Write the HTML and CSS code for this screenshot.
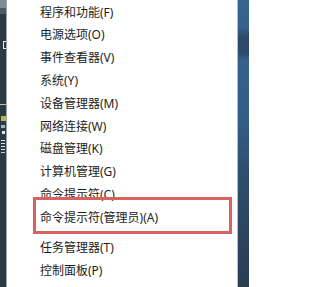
FILE: index.html
```html
<!DOCTYPE html>
<html lang="zh-CN">
<head>
<meta charset="utf-8">
<title>Win+X 菜单</title>
<link rel="stylesheet" href="styles.css">
</head>
<body>
<div class="screen">
  <div class="desk-left">
    <svg width="7" height="287" viewBox="0 0 7 287">
      <rect x="0" y="0" width="6" height="287" fill="#2c3a43"/>
      <rect x="0" y="0" width="6" height="8" fill="#7d8d98"/>
      <rect x="0" y="8" width="6" height="6" fill="#4c5b65"/>
      <rect x="6" y="0" width="1" height="287" fill="#9aa3a8"/>
      <rect x="3" y="41" width="3" height="1" fill="#e8ecee"/>
      <rect x="3" y="41" width="1" height="8" fill="#e8ecee"/>
      <rect x="3" y="48" width="3" height="1" fill="#e8ecee"/>
      <rect x="0" y="104" width="6" height="1" fill="#c9c48a"/>
      <rect x="1" y="116" width="5" height="5" fill="#b9b649"/>
      <rect x="1" y="125" width="4" height="3" fill="#9fb4c8"/>
      <rect x="2" y="131" width="3" height="3" fill="#dfe6ec"/>
      <rect x="1" y="140" width="4" height="1" fill="#dfe3e6"/>
      <rect x="1" y="143" width="4" height="1" fill="#dfe3e6"/>
      <rect x="1" y="146" width="4" height="1" fill="#dfe3e6"/>
      <rect x="1" y="149" width="4" height="1" fill="#dfe3e6"/>
      <rect x="1" y="152" width="4" height="1" fill="#c9ced2"/>
    </svg>
  </div>
  <div class="menu">
    <ul class="group">
      <li class="item">程序和功能(F)</li>
      <li class="item">电源选项(O)</li>
      <li class="item">事件查看器(V)</li>
      <li class="item">系统(Y)</li>
      <li class="item">设备管理器(M)</li>
      <li class="item">网络连接(W)</li>
      <li class="item">磁盘管理(K)</li>
      <li class="item">计算机管理(G)</li>
      <li class="item">命令提示符(C)</li>
      <li class="item">命令提示符(管理员)(A)</li>
    </ul>
    <ul class="group group-second">
      <li class="item">任务管理器(T)</li>
      <li class="item">控制面板(P)</li>
    </ul>
    <div class="highlight"></div>
  </div>
  <div class="desk-right"></div>
</div>
</body>
</html>
```

FILE: styles.css
```css
html, body {
  margin: 0;
  padding: 0;
  background: #ffffff;
}

.screen {
  display: flex;
  width: 249px;
  height: 287px;
  overflow: hidden;
}

.desk-left {
  width: 7px;
  flex: 0 0 7px;
  line-height: 0;
}

.menu {
  position: relative;
  flex: 1 1 auto;
  background: #ffffff;
  padding-top: 1.6px;
  border-right: 1px solid #b9c0c6;
}

.group {
  list-style: none;
  margin: 0;
  padding: 0 0 0 33px;
}

.group-second {
  margin-top: 7.6px;
}

.item {
  height: 22.8px;
  line-height: 22.8px;
  font-family: "Noto Sans", "Noto Sans CJK SC", sans-serif;
  font-size: 12px;
  color: #1d1d1d;
  white-space: nowrap;
}

.highlight {
  position: absolute;
  left: 26px;
  top: 197px;
  width: 193px;
  height: 31px;
  border: 3px solid #d9625e;
}

.desk-right {
  flex: 0 0 11px;
  width: 11px;
  background: linear-gradient(
    to bottom,
    #37658f 0px,
    #35618b 28px,
    #2f4a6b 36px,
    #2e4868 52px,
    #35608a 60px,
    #335d86 120px,
    #2f4f70 170px,
    #2c4560 230px,
    #2a3d53 287px
  );
}
```
